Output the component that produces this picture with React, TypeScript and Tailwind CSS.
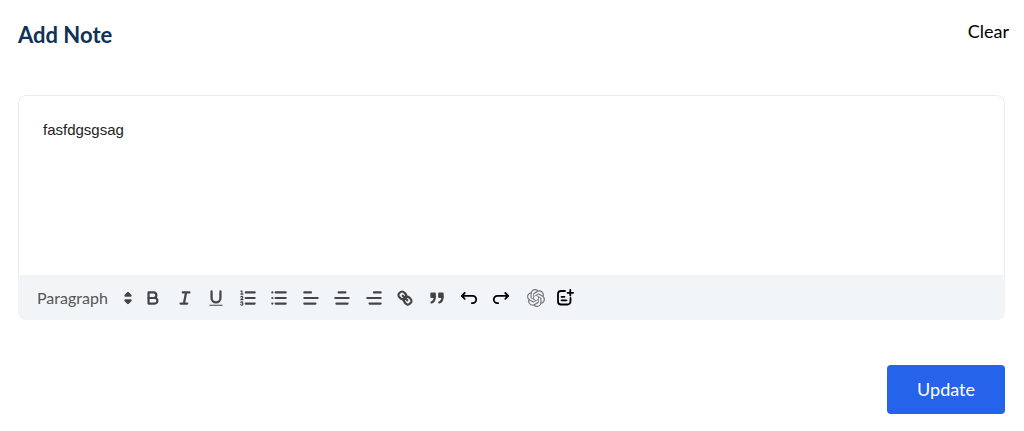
import { ReactNode } from 'react';
import { SiOpenai } from 'react-icons/si';

const QuillIcon = ({ children }: { children: ReactNode }) => (
  <svg
    viewBox="0 0 18 18"
    className="size-5"
    fill="none"
    stroke="currentColor"
    strokeWidth="2"
    strokeLinecap="round"
    strokeLinejoin="round"
    aria-hidden="true"
  >
    {children}
  </svg>
);

const formats = [
  {
    label: 'Bold',
    icon: (
      <>
        <path d="M5,4H9.5A2.5,2.5,0,0,1,12,6.5v0A2.5,2.5,0,0,1,9.5,9H5V4Z" />
        <path d="M5,9h5.5A2.5,2.5,0,0,1,13,11.5v0A2.5,2.5,0,0,1,10.5,14H5V9Z" />
      </>
    ),
  },
  { label: 'Italic', icon: <path d="M7,4H13M5,14H11M8,14L10,4" /> },
  {
    label: 'Underline',
    icon: (
      <>
        <path d="M5,3V9a4.012,4.012,0,0,0,4,4H9a4.012,4.012,0,0,0,4-4V3" />
        <rect x="3" y="15" width="12" height="1" rx="0.5" fill="currentColor" stroke="none" />
      </>
    ),
  },
  {
    label: 'Ordered list',
    icon: (
      <>
        <path d="M7,4H15M7,9H15M7,14H15" />
        <g strokeWidth="1">
          <path d="M2.5,5.5H4.5M2.6,2.9L3.5,2.5V5.5" />
          <path d="M4.5,10.5h-2c0-.234,1.85-1.076,1.85-2.234A0.959,0.959,0,0,0,2.5,8.156" />
          <path d="M2.5,14.846a0.959,0.959,0,0,0,1.85-.109A0.7,0.7,0,0,0,3.75,14a0.688,0.688,0,0,0,.6-0.736,0.959,0.959,0,0,0-1.85-.109" />
        </g>
      </>
    ),
  },
  {
    label: 'Bullet list',
    icon: <path d="M6,4H15M6,9H15M6,14H15M3,4H3M3,9H3M3,14H3" />,
  },
  { label: 'Align left', icon: <path d="M3,9H15M3,14H13M3,4H9" /> },
  { label: 'Align center', icon: <path d="M3,9H15M4,14H14M6,4H12" /> },
  { label: 'Align right', icon: <path d="M3,9H15M5,14H15M9,4H15" /> },
  {
    label: 'Link',
    icon: (
      <>
        <path d="M7,7L11,11" />
        <path d="M8.9,4.577a3.476,3.476,0,0,1,.36,4.679A3.476,3.476,0,0,1,4.577,8.9C3.185,7.5,2.035,6.4,4.217,4.217S7.5,3.185,8.9,4.577Z" />
        <path d="M13.423,9.1a3.476,3.476,0,0,0-4.679-.36,3.476,3.476,0,0,0,.36,4.679c1.392,1.392,2.5,2.542,4.679.36S14.815,10.5,13.423,9.1Z" />
      </>
    ),
  },
  {
    label: 'Blockquote',
    icon: (
      <g fill="currentColor">
        <rect x="4" y="5" width="3" height="3" />
        <rect x="11" y="5" width="3" height="3" />
        <path d="M7,8c0,4.031-3,5-3,5" />
        <path d="M14,8c0,4.031-3,5-3,5" />
      </g>
    ),
  },
];

const Toolbar = () => {
  return (
    <div className="flex h-[45px] items-center bg-[#f1f5f8] pl-[17px] text-[#444]">
      <div className="relative flex w-24 items-center">
        <select
          aria-label="Text style"
          className="w-full appearance-none bg-transparent px-0.5 text-base text-[#555] outline-none"
        >
          <option>Paragraph</option>
        </select>
        <svg
          viewBox="0 0 18 18"
          className="pointer-events-none absolute -right-2 size-[22px]"
          fill="currentColor"
          stroke="currentColor"
          strokeWidth="2"
          strokeLinejoin="round"
          aria-hidden="true"
        >
          <path d="M7,11L9,13L11,11ZM7,7L9,5L11,7Z" />
        </svg>
      </div>
      <div className="ml-3 flex w-76 justify-between">
        {formats.map(({ label, icon }) => (
          <button key={label} type="button" aria-label={label}>
            <QuillIcon>{icon}</QuillIcon>
          </button>
        ))}
      </div>
      <div className="ml-3 flex gap-3 text-black">
        <button type="button" aria-label="Undo">
          <svg viewBox="0 0 20 20" className="size-5" fill="none" stroke="currentColor" strokeWidth="1.8" strokeLinecap="round" strokeLinejoin="round">
            <path d="M5.7,5L2.8,7.9L5.7,10.8M2.8,7.9H13.6A3.6,3.6,0,0,1,13.6,15.1H12.8" />
          </svg>
        </button>
        <button type="button" aria-label="Redo">
          <svg viewBox="0 0 20 20" className="size-5" fill="none" stroke="currentColor" strokeWidth="1.8" strokeLinecap="round" strokeLinejoin="round">
            <path d="M14.3,5L17.2,7.9L14.3,10.8M17.2,7.9H6.4A3.6,3.6,0,0,0,6.4,15.1H7.2" />
          </svg>
        </button>
      </div>
      <div className="ml-4 flex items-center gap-2.5">
        <button type="button" aria-label="Write with AI" className="text-[#777]">
          <SiOpenai className="size-[18px]" />
        </button>
        <button type="button" aria-label="Add template" className="text-black">
          <svg viewBox="0 0 20 20" className="size-5" fill="none" stroke="currentColor" strokeWidth="1.8" strokeLinecap="round" strokeLinejoin="round">
            <path d="M10,3H6A3,3,0,0,0,3,6V13.5A3,3,0,0,0,6,16.5H12.5A3,3,0,0,0,15.5,13.5V10" />
            <path d="M15.3,2V7.6M12.5,4.8H18.1M6.5,8.8H9.5M6.5,12.3H11.5" />
          </svg>
        </button>
      </div>
    </div>
  );
};

export default function App() {
  return (
    <main className="bg-white pt-[17px] pr-[19px] pb-4 pl-[18px] font-[Lato,sans-serif]">
      <header className="-mr-1 flex items-start justify-between">
        <h1 className="pt-0.5 text-[22px] leading-8 font-bold text-[#0f3256]">Add Note</h1>
        <button type="button" className="text-lg text-black">
          Clear
        </button>
      </header>
      <div className="mt-11 overflow-hidden rounded-lg">
        <textarea
          aria-label="Note"
          spellCheck={false}
          defaultValue="fasfdgsgsag"
          className="block h-45 w-full resize-none rounded-t-lg border border-b-0 border-[#ebebeb] px-6 py-6 font-[Liberation_Sans,Arial,sans-serif] text-[15px] leading-5 text-[#222] outline-none"
        />
        <Toolbar />
      </div>
      <div className="mt-[45px] flex justify-end">
        <button
          type="button"
          className="rounded bg-[#2563eb] px-[30px] py-3 text-lg leading-[25px] text-white"
        >
          Update
        </button>
      </div>
    </main>
  );
}
